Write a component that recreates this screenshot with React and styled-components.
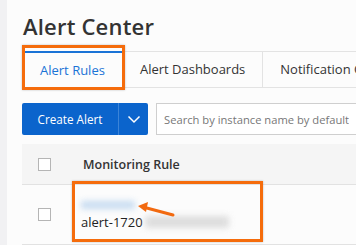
import React from 'react'
import styled, {createGlobalStyle} from 'styled-components'

const GlobalStyle = createGlobalStyle`
  html, body {
    margin: 0;
    padding: 0;
    background: #fcfcfc;
    font-family: "Open Sans", "Noto Sans", sans-serif;
    color: #333;
    overflow: hidden;
  }
`

const tabs = ['Alert Rules', 'Alert Dashboards', 'Notification Objects']

export default function App() {
  return (
    <Page>
      <GlobalStyle />
      <SideEdge />
      <Main>
        <Title>Alert Center</Title>
        <TabBar>
          {tabs.map((t, i) => (
            <Tab key={t} active={i === 0}>
              {t}
            </Tab>
          ))}
        </TabBar>
        <Toolbar>
          <SplitButton>
            <PrimaryPart>Create Alert</PrimaryPart>
            <CaretPart>
              <svg width="14" height="9" viewBox="0 0 14 9">
                <path d="M1.5 1.5 L7 7 L12.5 1.5" fill="none" stroke="#fff" strokeWidth="1.5" />
              </svg>
            </CaretPart>
          </SplitButton>
          <Search placeholder="Search by instance name by default" />
        </Toolbar>
        <Table>
          <HeadRow>
            <CheckCell>
              <Check />
            </CheckCell>
            <HeadText>Monitoring Rule</HeadText>
          </HeadRow>
          <BodyRow>
            <CheckCell>
              <Check />
            </CheckCell>
            <RuleCell>
              <Blurred color="#b9d3ee" width="54px" />
              <RuleName>
                alert-1720
                <Blurred color="#d6d6d6" width="84px" />
              </RuleName>
              <Arrow viewBox="0 0 40 16" width="40" height="16">
                <path d="M36 12 L6 4" stroke="#f26a10" strokeWidth="3" strokeLinecap="round" />
                <path d="M1 3 L11 -1 L9 9 Z" fill="#f26a10" />
              </Arrow>
            </RuleCell>
          </BodyRow>
        </Table>
      </Main>
    </Page>
  )
}

const Page = styled.div`
  display: flex;
  width: 356px;
  height: 245px;
  overflow: hidden;
`

const SideEdge = styled.div`
  width: 7px;
  flex: 0 0 7px;
  background: #f1f1f3;
`

const Main = styled.div`
  flex: 1;
  padding-left: 15px;
  min-width: 0;
`

const Title = styled.h1`
  margin: 0;
  padding-top: 8px;
  height: 36px;
  font-size: 22px;
  font-weight: 600;
  line-height: 36px;
  color: #333;
  letter-spacing: 0.2px;
  padding-left: 1px;
`

const TabBar = styled.div`
  display: flex;
  margin-top: 7px;
  border-top: 1px solid #e3e3e3;
  border-bottom: 1px solid #e3e3e3;
  height: 35px;
  white-space: nowrap;
`

const Tab = styled.div`
  position: relative;
  flex: 0 0 auto;
  padding: 0 17px 0 ${p => (p.active ? '18px' : '17px')};
  font-size: 13px;
  color: ${p => (p.active ? '#1a73d6' : '#333')};
  border-right: 1px solid ${p => (p.active ? 'transparent' : '#e3e3e3')};
  border-top: ${p => (p.active ? '2px solid #1a73d6' : 'none')};
  margin-top: ${p => (p.active ? '-1px' : '0')};
  line-height: ${p => (p.active ? '34px' : '35px')};

  ${p =>
    p.active &&
    `
    &::after {
      content: '';
      position: absolute;
      left: 0;
      top: -8px;
      right: -3px;
      bottom: -3px;
      border: 3px solid #f56c0c;
      box-shadow: 0 0 2px rgba(0,0,0,0.25);
    }
  `}
`

const Toolbar = styled.div`
  display: flex;
  gap: 8px;
  margin-top: 15px;
  height: 32px;
`

const SplitButton = styled.div`
  display: flex;
  background: #0b64cc;
  border-radius: 2px;
  height: 32px;
  flex: 0 0 auto;
`

const PrimaryPart = styled.div`
  width: 96px;
  color: #fff;
  font-size: 11.7px;
  line-height: 32px;
  text-align: center;
  border-right: 1px solid #3b84d8;
`

const CaretPart = styled.div`
  width: 29px;
  display: flex;
  align-items: center;
  justify-content: center;
`

const Search = styled.input`
  flex: 1;
  min-width: 0;
  height: 32px;
  box-sizing: border-box;
  border: 1px solid #cfcfcf;
  border-right: none;
  background: #fff;
  padding: 0 7px;
  font-family: inherit;
  font-size: 11.2px;
  &::placeholder {
    color: #777;
  }
`

const Table = styled.div`
  margin-top: 9px;
`

const HeadRow = styled.div`
  display: flex;
  align-items: center;
  height: 40px;
  background: #f5f5f5;
  border-bottom: 1px solid #e2e2e2;
`

const BodyRow = styled.div`
  display: flex;
  align-items: center;
  height: 59px;
  border-bottom: 1px solid #e2e2e2;
  background: #fcfcfc;
`

const CheckCell = styled.div`
  width: 59px;
  flex: 0 0 59px;
  padding-left: 16px;
  box-sizing: border-box;
`

const Check = styled.div`
  width: 11px;
  height: 11px;
  border: 1px solid #b5b5b5;
  background: #fff;
`

const HeadText = styled.div`
  font-size: 12.5px;
  font-weight: 600;
  color: #333;
  padding-left: 2px;
`

const RuleCell = styled.div`
  position: relative;
  display: flex;
  flex-direction: column;
  gap: 4px;
  padding-top: 2px;

  &::before {
    content: '';
    position: absolute;
    left: -9px;
    top: -18px;
    width: 185px;
    height: 55px;
    border: 3px solid #f56c0c;
    box-shadow: 0 0 2px rgba(0,0,0,0.25);
  }
`

const Blurred = styled.span`
  display: inline-block;
  width: ${p => p.width};
  height: 8px;
  background: ${p => p.color};
  filter: blur(3px);
  opacity: 0.8;
`

const RuleName = styled.div`
  display: flex;
  align-items: center;
  font-size: 13px;
  color: #222;
  & > span {
    height: 12px;
    margin-left: 2px;
  }
`

const Arrow = styled.svg`
  position: absolute;
  left: 56px;
  top: 4px;
  overflow: visible;
`
